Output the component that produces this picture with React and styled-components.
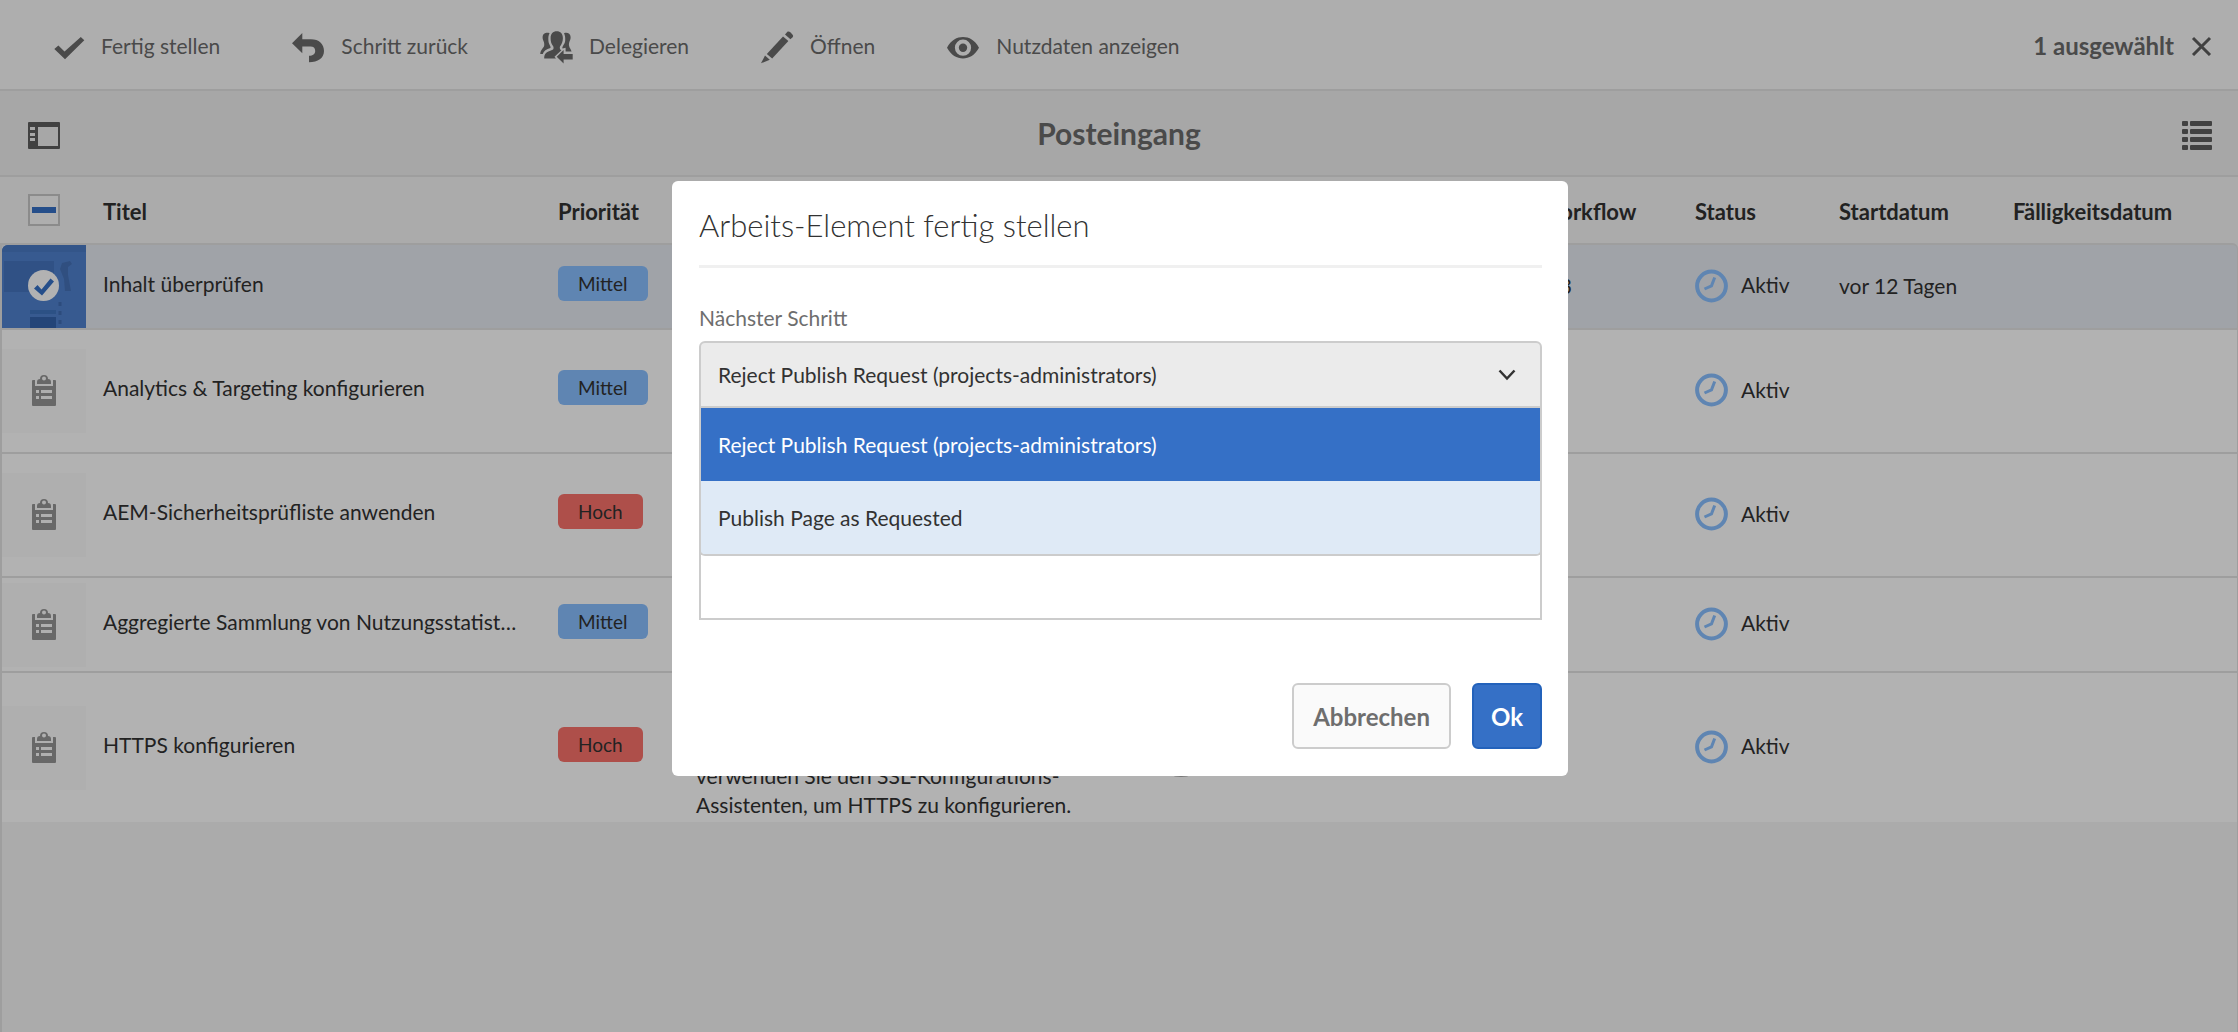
import React from 'react';
import styled, { createGlobalStyle, css } from 'styled-components';

const GlobalStyle = createGlobalStyle`
  * { box-sizing: border-box; }
  body {
    margin: 0;
    background: #f5f5f5;
    color: #323232;
    font-family: Lato, "Open Sans", sans-serif;
    font-size: 21px;
  }
  button, select, textarea, input { font-family: inherit; }
`;

const line = '#e3e3e3';
const blue = '#3570c6';

const Page = styled.div`
  display: flex;
  flex-direction: column;
  min-height: 100vh;
`;

/* Selection toolbar */

const Toolbar = styled.header`
  display: flex;
  align-items: center;
  justify-content: space-between;
  height: 91px;
  padding: 2px 26px 0 52px;
  background: #fafafa;
  border-bottom: 2px solid ${line};
`;

const Actions = styled.div`
  display: flex;
  gap: 72px;
`;

const Action = styled.button`
  display: flex;
  align-items: center;
  gap: 17px;
  padding: 0;
  border: 0;
  background: none;
  color: #6b6b6b;
  font-size: 21px;
  white-space: nowrap;
  cursor: pointer;
`;

const Deselect = styled(Action)`
  font-size: 24px;
  font-weight: 700;
`;

/* Title bar */

const TitleBar = styled.div`
  display: grid;
  grid-template-columns: 1fr auto 1fr;
  align-items: center;
  height: 86px;
  padding: 0 26px;
  background: #f0f0f0;
  border-bottom: 2px solid ${line};
`;

const PageTitle = styled.h1`
  margin: 0;
  color: #6b6b6b;
  font-size: 30px;
  line-height: 36px;
  font-weight: 700;
`;

const IconButton = styled.button`
  display: flex;
  justify-self: ${(p) => (p.$end ? 'end' : 'start')};
  padding: 0;
  border: 0;
  background: none;
  color: #5e5e5e;
  cursor: pointer;
`;

/* Inbox list */

const List = styled.table`
  width: 100%;
  table-layout: fixed;
  border-collapse: separate;
  border-spacing: 0;
`;

const Col = styled.col`
  width: ${(p) => (p.$w ? `${p.$w}px` : 'auto')};
`;

const HeadCell = styled.th`
  height: 66px;
  padding: ${(p) => (p.$select ? '0 0 0 28px' : '3px 0 0 17px')};
  font-size: 22px;
  line-height: 28px;
  font-weight: 700;
  text-align: left;
  white-space: nowrap;
`;

const SelectAll = styled.input`
  appearance: none;
  display: flex;
  align-items: center;
  justify-content: center;
  width: 32px;
  height: 32px;
  margin: 0;
  border: 2px solid #c8c8c8;
  background: #fafafa;

  &::after {
    content: '';
    width: 24px;
    height: 6px;
    background: ${blue};
  }
`;

const Row = styled.tr`
  height: ${(p) => p.$height}px;
  background: ${(p) => (p.$selected ? '#e5eaf1' : '#ffffff')};
`;

const Cell = styled.td`
  padding: 0 0 ${(p) => (p.$raised ? 7 : 2)}px 17px;
  line-height: 29px;
  vertical-align: middle;
  white-space: pre-line;
  border-bottom: ${(p) => (p.$last ? 0 : 2)}px solid ${line};

  &:last-child { border-right: 1px solid ${line}; }

  ${(p) => p.$selected && css`
    border-top: 2px solid ${line};
    &:last-child { border-top-right-radius: 6px; }
  `}
`;

const ThumbCell = styled(Cell)`
  padding: 0;
  border-left: 2px solid ${line};
`;

const Thumb = styled.div`
  display: flex;
  align-items: center;
  justify-content: center;
  height: ${(p) => (p.$selected ? 83 : 84)}px;
  overflow: hidden;
  background: ${(p) => (p.$selected ? '#5081ce' : '#fbfbfb')};
  border-top-left-radius: ${(p) => (p.$selected ? 6 : 0)}px;
  color: #959595;
`;

const Tag = styled.span`
  display: inline-block;
  padding: 0 20px;
  border-radius: 6px;
  background: ${(p) => (p.$high ? '#f9726b' : '#88bfff')};
  font-size: 19px;
  line-height: 35px;
`;

const Status = styled.div`
  display: flex;
  align-items: center;
  gap: 12px;
  color: #88bfff;
`;

const StatusText = styled.span`
  padding-bottom: 2px;
  color: #323232;
`;

const Filler = styled.div`
  flex: 1;
  border: solid ${line};
  border-width: 0 1px 0 2px;
`;

/* Dialog */

const Backdrop = styled.div`
  position: fixed;
  inset: 0;
  display: flex;
  align-items: flex-start;
  justify-content: center;
  padding: 181px 16px 16px 18px;
  background: rgba(0, 0, 0, 0.3);
`;

const Dialog = styled.form`
  width: 100%;
  max-width: 896px;
  padding: 0 26px 27px 27px;
  border-radius: 6px;
  background: #ffffff;
`;

const DialogTitle = styled.h2`
  margin: 0 0 35px;
  padding: 24px 0 20px;
  border-bottom: 3px solid #f0f0f0;
  font-size: 31px;
  line-height: 40px;
  font-weight: 300;
`;

const Label = styled.label`
  display: block;
  margin-bottom: 8px;
  color: #6e6e6e;
  font-size: 21px;
  line-height: 30px;
`;

const Dropdown = styled.div`
  position: relative;
  margin-bottom: 20px;
`;

const Select = styled.select`
  appearance: none;
  display: block;
  width: 100%;
  height: 67px;
  padding: 0 60px 0 17px;
  border: 2px solid #cccccc;
  border-radius: 6px 6px 0 0;
  background: #ebebeb;
  color: #323232;
  font-size: 21px;
  outline: 0;
`;

const Chevron = styled.svg`
  position: absolute;
  top: 28px;
  right: 26px;
  pointer-events: none;
`;

const Options = styled.ul`
  position: absolute;
  top: 100%;
  left: 0;
  right: 0;
  margin: 0;
  padding: 0;
  list-style: none;
  border: 2px solid #cccccc;
  border-top: 0;
  border-radius: 0 0 6px 6px;
  background: #dfeaf6;
  overflow: hidden;
`;

const Option = styled.li`
  padding: 0 17px;
  line-height: 73px;
  background: ${(p) => (p.$active ? blue : '#dfeaf6')};
  color: ${(p) => (p.$active ? '#ffffff' : '#323232')};
`;

const Comment = styled.textarea`
  display: block;
  width: 100%;
  height: 154px;
  margin-bottom: 63px;
  padding: 12px 17px;
  border: 2px solid #cccccc;
  font-size: 21px;
  resize: none;
`;

const Footer = styled.div`
  display: flex;
  justify-content: flex-end;
  gap: 21px;
`;

const Button = styled.button`
  height: 66px;
  padding: 0 ${(p) => (p.$primary ? 17 : 19)}px;
  border: 2px solid ${(p) => (p.$primary ? '#2362bb' : '#cccccc')};
  border-radius: 6px;
  background: ${(p) => (p.$primary ? blue : '#fafafa')};
  color: ${(p) => (p.$primary ? '#ffffff' : '#6e6e6e')};
  font-size: 24px;
  font-weight: 700;
`;

/* Icons */

const ActionIcon = ({ children }) => (
  <svg width="32" height="36" viewBox="0 0 32 36" fill="currentColor" overflow="visible" aria-hidden="true">
    {children}
  </svg>
);

const actions = [
  ['Fertig stellen', <path d="M2.3 21 6.4 17.6 12.5 23.5 28.8 9 32.3 12.2 13 31.2Z" />],
  ['Schritt zurück', (
    <path d="M0 15.3 10.3 5V11.3H19C27 11.3 32 16 32 23S26 34.3 17 34.3V27.8C21 27.8 23.2 26 23.2 23S21.5 18.6 18.5 18.6H10.3V25.3Z" />
  )],
  ['Delegieren', (
    <>
      <path d="M16.7 3.3C20.5 3.3 22.9 5.8 22.9 10.2 22.9 13.4 21.7 16.2 20 18.4 19.4 20 20 21.6 21.4 22.2L14.5 28.8 16 30.4H4.2C4.2 26 5.8 24.2 12.6 21.8 13.8 21 13.8 19.6 13.2 18.2 11.4 16 10.6 13.4 10.6 10.2 10.6 5.8 13 3.3 16.7 3.3Z" />
      <path d="M9.6 5.2C7 4.2 2.8 4.8 2.6 9 2.4 12.4 4.8 13.8 4.2 17.4 3.8 20 .6 21.2.2 26H2.8C3.6 22.8 6.4 21.4 10.4 20 11.4 18.4 8.6 16.4 8.4 12.4 8.2 9.4 8.4 7 9.6 5.2Z" />
      <path d="M24 5.2C26.6 4.2 30.4 4.8 30.6 9 30.8 12.4 28.6 13.8 29 17.4 29.4 20 31 21 31.6 23.6H25.6V19.8L22.6 20.6C21.4 18.6 25 16.4 25.2 12.4 25.4 9.4 25 7 24 5.2Z" />
      <path d="M16.7 28.8 23.6 22V26H32.7V31.4H23.6V35.6Z" />
    </>
  )],
  ['Öffnen', (
    <>
      <path d="M0 35.3 4 27.6 8.8 31.8Z" />
      <path d="M5.8 26 22 8.4 27.4 13 11.2 30.6Z" />
      <path d="M24 6.4 26.4 3.8C27.4 3.4 28.6 3.6 29.6 4.6L31.6 6.8C32.4 7.8 32.2 8.6 31.6 9.2L29.4 11.2Z" />
    </>
  )],
  ['Nutzdaten anzeigen', (
    <>
      <path fillRule="evenodd" d="M0 19.7C4 12 10 9 16 9S28 12 32 19.7C28 27.2 22 30.4 16 30.4S4 27.2 0 19.7ZM16 11.6A8.1 8.1 0 1 0 16 27.8 8.1 8.1 0 1 0 16 11.6Z" />
      <circle cx="16" cy="19.7" r="4.2" />
    </>
  )],
];

const CloseIcon = () => (
  <svg width="21" height="20" viewBox="0 0 21 20" fill="none" stroke="#5e5e5e" strokeWidth="3" aria-hidden="true">
    <path d="M2 2 19 19M19 2 2 19" />
  </svg>
);

const RailIcon = () => (
  <svg width="36" height="36" viewBox="0 0 36 36" aria-hidden="true">
    <path
      fill="currentColor"
      fillRule="evenodd"
      d="M3 7H33Q34 7 34 8V33Q34 34 33 34H3Q2 34 2 33V8Q2 7 3 7ZM12 12V31H32V12ZM4 12V15H9V12ZM4 18V21H9V18ZM4 23V26H9V23Z"
    />
  </svg>
);

const ListIcon = () => (
  <svg width="30" height="36" viewBox="0 0 30 36" fill="currentColor" aria-hidden="true">
    {[6, 14, 22, 30].map((y) => (
      <React.Fragment key={y}>
        <rect x="0" y={y} width="6" height="5" rx="1" />
        <rect x="8" y={y} width="22" height="5" rx="1" />
      </React.Fragment>
    ))}
  </svg>
);

const ClockIcon = () => (
  <svg width="34" height="34" viewBox="0 0 34 34" fill="none" stroke="currentColor" aria-hidden="true">
    <circle cx="16.500" cy="17" r="14.4" strokeWidth="4" />
    <path d="M19.7 8.5 16.5 16.8 9.500 20" strokeWidth="3" />
  </svg>
);

const TaskIcon = () => (
  <svg width="24" height="34" viewBox="0 0 24 34" fill="currentColor" aria-hidden="true">
    <path fillRule="evenodd" d="M5 10V8Q5 5 8 5A4 4 0 0 1 16 5Q19 5 19 8V10ZM12 2.6A2 2 0 1 0 12 6.6 2 2 0 1 0 12 2.6Z" />
    <path
      fillRule="evenodd"
      d="M1 6H3V12H21V6H23Q24 6 24 7V31Q24 32 23 32H1Q0 32 0 31V7Q0 6 1 6ZM4 16V19H7V16ZM9 16V19H20V16ZM4 22V25H7V22ZM9 22V25H20V22Z"
    />
  </svg>
);

const PagePreview = () => (
  <svg width="84" height="83" viewBox="0 0 84 83" aria-hidden="true">
    <rect width="84" height="7" fill="#4a7ac4" />
    <rect x="2" y="16" width="50" height="31" fill="#4575bf" />
    <path d="M60 18 68 16 70 19 66 22 66 30 69 46H63L62 34 58 24Z" fill="#4572b8" />
    <rect x="28" y="65" width="26" height="4" fill="#3f74bf" />
    <rect x="28" y="72" width="26" height="11" fill="#3463ad" />
    <path d="M58 57V83" stroke="#406db4" strokeWidth="3" strokeDasharray="4 5" />
    <circle cx="41.500" cy="40.500" r="15.500" fill="#ffffff" />
    <path d="M32 43.500 35.500 40 39.500 44.500 48.500 33.500 52 36.500 40 50.500Z" fill={blue} />
  </svg>
);

const AssigneeIcon = () => (
  <svg width="60" height="60" viewBox="0 0 60 60" fill="#aaaaaa" aria-hidden="true">
    <path fillRule="evenodd" d="M30 0A30 30 0 1 0 30 60 30 30 0 1 0 30 0ZM30 3A27 27 0 1 1 30 57 27 27 0 1 1 30 3Z" />
    <circle cx="30" cy="23" r="10" />
    <path d="M12 47C14 37 22 35 30 35S46 37 48 47Z" />
  </svg>
);

/* Data */

const columns = [
  ['Titel', 455],
  ['Priorität', 138],
  ['Beschreibung', null],
  ['Bearbeiter', 306],
  ['Projekt/Workflow', 238],
  ['Status', 144],
  ['Startdatum', 174],
  ['Fälligkeitsdatum', 242],
];

const items = [
  { title: 'Inhalt überprüfen', height: 87, selected: true, text: 'Inhalt der Seite überprüfen.', project: 'Kampagne 3', start: 'vor 12 Tagen' },
  { title: 'Analytics & Targeting konfigurieren', height: 124, text: 'Binden Sie Adobe Analytics\nund Adobe Target ein.' },
  { title: 'AEM-Sicherheitsprüfliste anwenden', height: 124, high: true, text: 'Wenden Sie die Sicherheits-\nprüfliste an.' },
  { title: 'Aggregierte Sammlung von Nutzungsstatist…', height: 95, text: 'Aktivieren Sie die Sammlung\nvon Nutzungsstatistiken.' },
  {
    title: 'HTTPS konfigurieren',
    height: 149,
    high: true,
    text: 'Sichern Sie die Verbindungen\nzu Ihrer Instanz über HTTPS ab\nund richten Sie SSL ein. Bitte\nverwenden Sie den SSL-Konfigurations-\nAssistenten, um HTTPS zu konfigurieren.',
  },
];

const steps = ['Reject Publish Request (projects-administrators)', 'Publish Page as Requested'];

const ItemRow = ({ item, last }) => {
  const cell = { $selected: item.selected, $last: last };
  return (
    <Row $height={item.height} $selected={item.selected}>
      <ThumbCell {...cell}>
        <Thumb $selected={item.selected}>{item.selected ? <PagePreview /> : <TaskIcon />}</Thumb>
      </ThumbCell>
      <Cell {...cell} $raised>{item.title}</Cell>
      <Cell {...cell} $raised>
        <Tag $high={item.high}>{item.high ? 'Hoch' : 'Mittel'}</Tag>
      </Cell>
      <Cell {...cell}>{item.text}</Cell>
      <Cell {...cell}>
        <Status><AssigneeIcon /></Status>
      </Cell>
      <Cell {...cell}>{item.project}</Cell>
      <Cell {...cell}>
        <Status>
          <ClockIcon />
          <StatusText>Aktiv</StatusText>
        </Status>
      </Cell>
      <Cell {...cell}>{item.start}</Cell>
      <Cell {...cell} />
    </Row>
  );
};

export default function App() {
  return (
    <>
      <GlobalStyle />
      <Page>
        <Toolbar>
          <Actions>
            {actions.map(([label, shape]) => (
              <Action key={label} type="button">
                <ActionIcon>{shape}</ActionIcon>
                {label}
              </Action>
            ))}
          </Actions>
          <Deselect type="button">
            1 ausgewählt
            <CloseIcon />
          </Deselect>
        </Toolbar>

        <TitleBar>
          <IconButton type="button" aria-label="Seitenleiste"><RailIcon /></IconButton>
          <PageTitle>Posteingang</PageTitle>
          <IconButton type="button" aria-label="Listenansicht" $end><ListIcon /></IconButton>
        </TitleBar>

        <List>
          <colgroup>
            <Col $w={86} />
            {columns.map(([name, width]) => <Col key={name} $w={width} />)}
          </colgroup>
          <thead>
            <tr>
              <HeadCell $select>
                <SelectAll type="checkbox" aria-label="Alle auswählen" />
              </HeadCell>
              {columns.map(([name]) => <HeadCell key={name} scope="col">{name}</HeadCell>)}
            </tr>
          </thead>
          <tbody>
            {items.map((item, i) => (
              <ItemRow key={item.title} item={item} last={i === items.length - 1} />
            ))}
          </tbody>
        </List>
        <Filler />
      </Page>

      <Backdrop>
        <Dialog role="dialog" aria-modal="true" aria-labelledby="dialog-title">
          <DialogTitle id="dialog-title">Arbeits-Element fertig stellen</DialogTitle>
          <Label htmlFor="next-step">Nächster Schritt</Label>
          <Dropdown>
            <Select id="next-step" defaultValue={steps[0]}>
              {steps.map((step) => <option key={step}>{step}</option>)}
            </Select>
            <Chevron width="18" height="12" viewBox="0 0 18 12" fill="none" stroke="#323232" strokeWidth="2.500" aria-hidden="true">
              <path d="M1.500 1.500 9 9.500 16.500 1.500" />
            </Chevron>
            <Options role="listbox" aria-label="Nächster Schritt">
              {steps.map((step, i) => (
                <Option key={step} role="option" aria-selected={i === 0} $active={i === 0}>{step}</Option>
              ))}
            </Options>
          </Dropdown>
          <Label htmlFor="comment">Kommentar</Label>
          <Comment id="comment" />
          <Footer>
            <Button type="button">Abbrechen</Button>
            <Button type="submit" $primary>Ok</Button>
          </Footer>
        </Dialog>
      </Backdrop>
    </>
  );
}
